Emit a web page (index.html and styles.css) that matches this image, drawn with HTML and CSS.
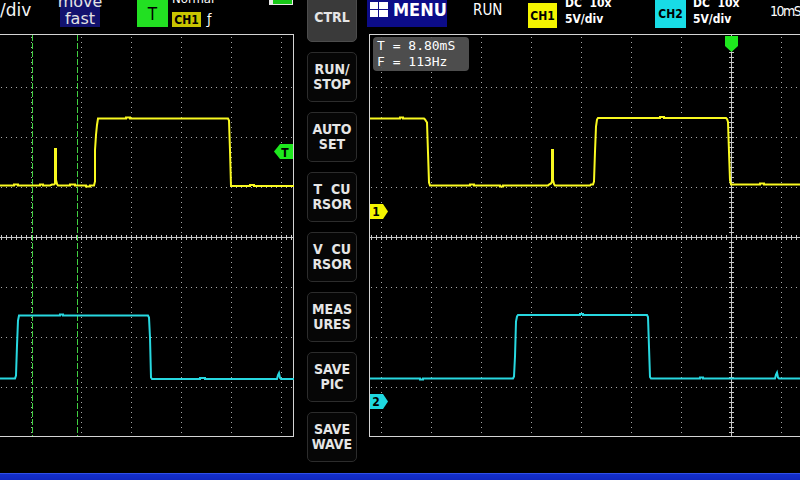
FILE: index.html
```html
<!DOCTYPE html>
<html>
<head>
<meta charset="utf-8">
<link rel="stylesheet" href="styles.css">
</head>
<body>
<div class="screen">
  <div class="main">
    <section class="col col-left">
      <header class="hdr">
        <span class="vdiv">/div</span>
        <div class="movebox"><span>move</span><span>fast</span></div>
        <div class="trig-t">T</div>
        <div class="trig-info">
          <span class="normal">Normal</span>
          <div class="trig-src"><span class="ch1-small">CH1</span><span class="edge">ƒ</span></div>
        </div>
        <svg class="battery" width="24" height="6" viewBox="0 0 24 6">
          <rect x="0" y="0" width="3" height="5" fill="#e8e8e8"/>
          <rect x="3.5" y="-1.5" width="20" height="6" fill="#18c818" stroke="#e8e8e8" stroke-width="1"/>
        </svg>
      </header>
      <div class="scope">
        <svg class="scope-svg" width="294" height="403" viewBox="0 34 294 403">
          <g stroke="#a8a8a8" stroke-width="1" stroke-dasharray="1 4" shape-rendering="crispEdges" fill="none">
            <path d="M31.5,37V437 M81.5,37V437 M131.5,37V437 M181.5,37V437 M231.5,37V437 M281.5,37V437"/>
            <path d="M1,87.5H293 M1,137.5H293 M1,187.5H293 M1,287.5H293 M1,337.5H293 M1,387.5H293"/>
          </g>
          <g stroke="#c8c8c8" shape-rendering="crispEdges" fill="none">
            <path d="M0,237.5H293"/>
            <path d="M1,237.5H293" stroke-width="5" stroke-dasharray="1 4"/>
          </g>
          <path d="M0,34.5H293.5V436.5H0" fill="none" stroke="#d4d4d4" shape-rendering="crispEdges"/>
          <line x1="32.5" y1="35" x2="32.5" y2="436" class="cursor"/>
          <line x1="77.5" y1="35" x2="77.5" y2="436" class="cursor"/>
          <path class="wave-y" d="M0,185.5 H14 v-1 h4 v1 H40 v-1 h3 v1 H50 l2,-1 h2 l1,-1 V149 h1 V180 l1,4 l1,1.5 H70 v-1 h5 v1 H86 v1 h4 v-1 H94 l1,-4 V150 l1,-15 l1,-10 l1,-6.5 H126 v-1 h4 v1 H228 l1,2 l1,30 l1,35.5 H250 v-1 h4 v1 H294"/>
          <path class="wave-c" d="M0,378.5 H15 l1,-3 l1,-30 l1,-25 l1,-5 H60 v-1 h3 v1 H148 l1,2 l1,20 l1,40 l1,1.5 H200 v-1 h5 v1 H277 l1,-4 l1,-2 l1,5 l1,1 H294"/>
          <polygon points="293,144 280,144 274,151.5 280,159 293,159" fill="#1ee81e"/>
          <text x="285" y="157" class="mk-text" text-anchor="middle">T</text>
        </svg>
      </div>
    </section>

    <nav class="buttons">
      <div class="btn active">CTRL</div>
      <div class="btn">RUN/<br>STOP</div>
      <div class="btn">AUTO<br>SET</div>
      <div class="btn">T&nbsp;&nbsp;CU<br>RSOR</div>
      <div class="btn">V&nbsp;&nbsp;CU<br>RSOR</div>
      <div class="btn">MEAS<br>URES</div>
      <div class="btn">SAVE<br>PIC</div>
      <div class="btn">SAVE<br>WAVE</div>
    </nav>

    <section class="col col-right">
      <header class="hdr">
        <div class="menu">
          <svg class="menu-icon" width="18" height="15" viewBox="0 0 18 15">
            <rect x="0" y="0" width="8" height="7" fill="#fff"/>
            <rect x="9" y="0" width="9" height="7" fill="#fff"/>
            <rect x="0" y="8" width="8" height="7" fill="#fff"/>
            <rect x="9" y="8" width="9" height="7" fill="#fff"/>
          </svg>
          <span class="menu-text">MENU</span>
        </div>
        <span class="run">RUN</span>
        <div class="chbox ch1">CH1</div>
        <div class="chinfo chinfo1"><span>DC  10x</span><span>5V/div</span></div>
        <div class="chbox ch2">CH2</div>
        <div class="chinfo chinfo2"><span>DC  10x</span><span>5V/div</span></div>
        <span class="tb">10mS</span>
      </header>
      <div class="scope scope-right">
        <svg class="scope-svg" width="433" height="403" viewBox="367 34 433 403">
          <g stroke="#a8a8a8" stroke-width="1" stroke-dasharray="1 4" shape-rendering="crispEdges" fill="none">
            <path d="M381.5,37V437 M431.5,37V437 M481.5,37V437 M531.5,37V437 M581.5,37V437 M631.5,37V437 M681.5,37V437 M781.5,37V437"/>
            <path d="M371,87.5H800 M371,137.5H800 M371,187.5H800 M371,287.5H800 M371,337.5H800 M371,387.5H800"/>
          </g>
          <g stroke="#c8c8c8" shape-rendering="crispEdges" fill="none">
            <path d="M370,237.5H800"/>
            <path d="M371,237.5H800" stroke-width="5" stroke-dasharray="1 4"/>
            <path d="M731.5,35V437"/>
            <path d="M731.5,37V437" stroke-width="5" stroke-dasharray="1 4"/>
          </g>
          <path d="M800,34.5H369.5V436.5H800" fill="none" stroke="#d4d4d4" shape-rendering="crispEdges"/>
          <path class="wave-y" d="M370,118.5 H400 v-1 h3 v1 H424 l1,1 l2,3 l1,30 l1,30 l1,3 H470 v-1 h4 v1 H500 v1 h3 v-1 H548 l1,-1 l2,-1 l1,-2 V150 h1 V180 l1,4 l1,1.5 H590 l1,-1 h2 l1,-3 l1,-30 l1,-25 l1,-7 l1,-1.5 H660 v-1 h4 v1 H726 l1,1 l1,3 l1,30 l1,28 l1,4.5 H760 v-1 h4 v1 H800"/>
          <path class="wave-c" d="M370,378.5 H420 v1 h3 v-1 H513 l1,-2 l1,-20 l1,-35 l1,-5 l1,-1.5 H580 v-1 h3 v1 H647 l1,2 l1,30 l1,30 l1,1.5 H700 v-1 h3 v1 H775 l1,-4 l1,-2 l1,5 l1,1 H800"/>
          <polygon points="370,204 383,204 388,211.5 383,219 370,219" fill="#f4f400"/>
          <text x="376" y="216" class="mk-text" text-anchor="middle">1</text>
          <polygon points="370,394 383,394 388,401.5 383,409 370,409" fill="#1ed8e0"/>
          <text x="376" y="406" class="mk-text" text-anchor="middle">2</text>
          <polygon points="725,36 738,36 738,46 731.5,52 725,46" fill="#1ee81e"/>
        </svg>
        <div class="meas">T = 8.80mS<br>F = 113Hz</div>
      </div>
    </section>
  </div>
  <footer class="statusbar"></footer>
</div>
</body>
</html>
```

FILE: styles.css
```css
* { box-sizing: border-box; }
html, body {
  margin: 0;
  padding: 0;
  background: #000;
  width: 800px;
  height: 480px;
  overflow: hidden;
}
body {
  font-family: "DejaVu Sans Condensed", "DejaVu Sans", sans-serif;
  font-stretch: condensed;
  color: #fff;
}
.screen {
  display: flex;
  flex-direction: column;
  width: 800px;
  height: 480px;
}
.main {
  display: flex;
  height: 473px;
}
.col { display: flex; flex-direction: column; flex: none; }
.col-left { width: 294px; }
.col-right { width: 433px; overflow: hidden; }
.hdr {
  display: flex;
  align-items: flex-start;
  height: 34px;
  flex: none;
}
.hdr > * { flex: none; }
.scope { position: relative; height: 403px; }
.scope-svg { display: block; }
.cursor {
  stroke: #40d040;
  stroke-width: 1;
  stroke-dasharray: 6 2;
  shape-rendering: crispEdges;
}

/* left header */
.vdiv {
  width: 60px;
  font-family: "DejaVu Sans", sans-serif;
  font-stretch: normal;
  font-size: 17px;
  line-height: 20px;
  margin-top: 0;
  color: #f4f4f4;
}
.movebox {
  width: 40px;
  height: 34px;
  margin-top: -7px;
  padding-top: 0;
  background: #12126e;
  display: flex;
  flex-direction: column;
  align-items: center;
  font-family: "DejaVu Sans", sans-serif;
  font-stretch: normal;
  font-size: 16px;
  line-height: 17px;
  color: #e4e4e4;
}
.trig-t {
  width: 31px;
  height: 27px;
  margin-left: 37px;
  background: #22e022;
  color: #000;
  font-family: "DejaVu Sans", sans-serif;
  font-size: 17px;
  display: flex;
  align-items: center;
  justify-content: center;
}
.trig-info {
  display: flex;
  flex-direction: column;
  margin-left: 4px;
  margin-top: -8px;
}
.normal {
  font-size: 13px;
  line-height: 14px;
}
.trig-src {
  display: flex;
  align-items: center;
  margin-top: 6px;
}
.ch1-small {
  width: 29px;
  height: 15px;
  background: #c8c400;
  color: #000;
  font-size: 12px;
  font-weight: bold;
  display: flex;
  align-items: center;
  justify-content: center;
}
.edge {
  margin-left: 6px;
  font-size: 14px;
  line-height: 15px;
}
.battery { margin-left: auto; margin-right: 1px; display: block; }

/* buttons */
.buttons {
  width: 73px;
  flex: none;
  display: flex;
  flex-direction: column;
  gap: 10px;
  padding-left: 13px;
  margin-top: -8px;
}
.btn {
  width: 50px;
  height: 50px;
  flex: none;
  border: 1px solid #2c2c2c;
  border-radius: 5px;
  background: #060606;
  display: flex;
  align-items: center;
  justify-content: center;
  text-align: center;
  font-size: 14px;
  font-weight: bold;
  line-height: 15px;
  color: #e6e6e6;
}
.btn.active {
  background: #3a3a3a;
  border-color: #4c4c4c;
}

/* right header */
.menu {
  width: 80px;
  height: 27px;
  background: #0c0c88;
  display: flex;
  align-items: flex-start;
  padding-top: 2px;
  padding-left: 3px;
}
.menu-icon { display: block; }
.menu-text {
  margin-left: 5px;
  font-size: 18px;
  font-weight: bold;
  line-height: 17px;
  margin-top: -1px;
}
.run {
  width: 55px;
  margin-left: 26px;
  margin-top: 2px;
  font-size: 15px;
  line-height: 16px;
}
.chbox {
  display: flex;
  align-items: center;
  justify-content: center;
  color: #000;
  font-size: 12px;
  font-weight: bold;
}
.ch1 {
  width: 29px;
  height: 25px;
  margin-top: 3px;
  background: #f4f400;
}
.ch2 {
  width: 31px;
  height: 28px;
  background: #18dce6;
}
.chinfo {
  display: flex;
  flex-direction: column;
  margin-top: -5px;
  font-size: 12px;
  font-weight: bold;
  line-height: 16px;
  white-space: pre;
}
.chinfo1 { width: 90px; margin-left: 8px; }
.chinfo2 { width: 77px; margin-left: 7px; }
.tb {
  font-size: 14px;
  letter-spacing: -1.5px;
  line-height: 16px;
  margin-top: 3px;
  white-space: nowrap;
}

/* waves */
.wave-y { fill: none; stroke: #f8f820; stroke-width: 2; }
.wave-c { fill: none; stroke: #28d8e0; stroke-width: 2; }
.mk-text {
  font-family: "DejaVu Sans", sans-serif;
  font-size: 12px;
  font-weight: bold;
  fill: #000;
}

.meas {
  position: absolute;
  left: 6px;
  top: 3px;
  width: 96px;
  height: 34px;
  padding: 1px 0 0 4px;
  background: rgba(84, 84, 84, 0.92);
  border-radius: 4px;
  font-family: "DejaVu Sans Mono", monospace;
  font-size: 13px;
  line-height: 16px;
  color: #fff;
  white-space: nowrap;
}

.statusbar {
  height: 7px;
  flex: none;
  background: linear-gradient(#3050e8 0, #3050e8 1px, #1430cc 1px, #1028c0 100%);
}
```
